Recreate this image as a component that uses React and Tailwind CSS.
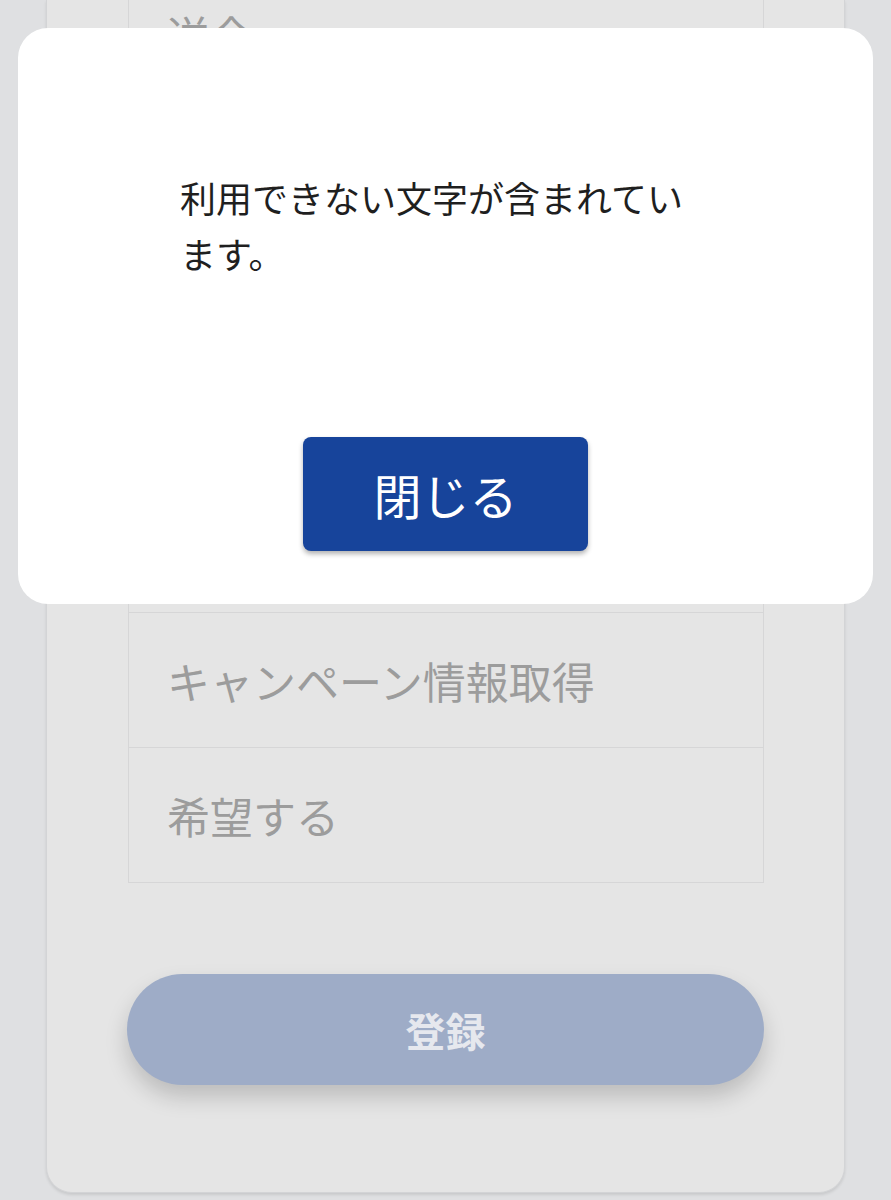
import { useState } from "react";

function Row({ children }) {
  return (
    <div className="flex h-[135px] items-center border-b border-[#d6d6d7] pl-[38px] text-[43px] text-[#9c9c9c]">
      {children}
    </div>
  );
}

export default function App() {
  const [open, setOpen] = useState(true);

  return (
    <div
      className="relative h-[1200px] overflow-hidden bg-[#dfe0e2]"
      style={{ fontFamily: '"Noto Sans CJK JP", "Noto Sans", sans-serif' }}
    >
      {/* form card (behind the overlay) */}
      <div className="ml-[46px] w-[799px] rounded-b-[26px] border-x border-b border-[#d3d4d6] bg-[#e5e5e5] pb-[107px] shadow-[0_2px_3px_rgba(0,0,0,0.1)]">
        <div className="ml-[81px] w-[636px] border-x border-[#d6d6d7]">
          <div className="h-[73px] border-b border-[#d6d6d7] pl-[38px] pt-[13px] text-[43px] leading-none text-[#9c9c9c]">
            送金
          </div>
          {/* rows hidden under the dialog */}
          <Row />
          <Row />
          <Row />
          <Row />
          <Row>キャンペーン情報取得</Row>
          <Row>希望する</Row>
        </div>

        <button className="ml-[80px] mt-[91px] flex h-[111px] w-[637px] items-center justify-center rounded-full bg-[#9eacc7] text-[40px] font-bold text-[#e6e8ee] shadow-[0_12px_22px_rgba(0,0,0,0.18)]">
          登録
        </button>
      </div>

      {/* alert dialog */}
      {open && (
        <div className="absolute left-[18px] top-[28px] flex h-[576px] w-[855px] flex-col rounded-[30px] bg-white pt-[141px]">
          <p className="ml-[162px] w-[520px] text-[36px] leading-[56px] text-[#1f1f1f]">
            利用できない文字が含まれています。
          </p>
          <button
            onClick={() => setOpen(false)}
            className="mx-auto mt-[156px] flex h-[114px] w-[285px] items-center justify-center rounded-[8px] bg-[#17449b] text-[48px] text-white shadow-[0_3px_5px_rgba(0,0,0,0.3)]"
          >
            閉じる
          </button>
        </div>
      )}
    </div>
  );
}
